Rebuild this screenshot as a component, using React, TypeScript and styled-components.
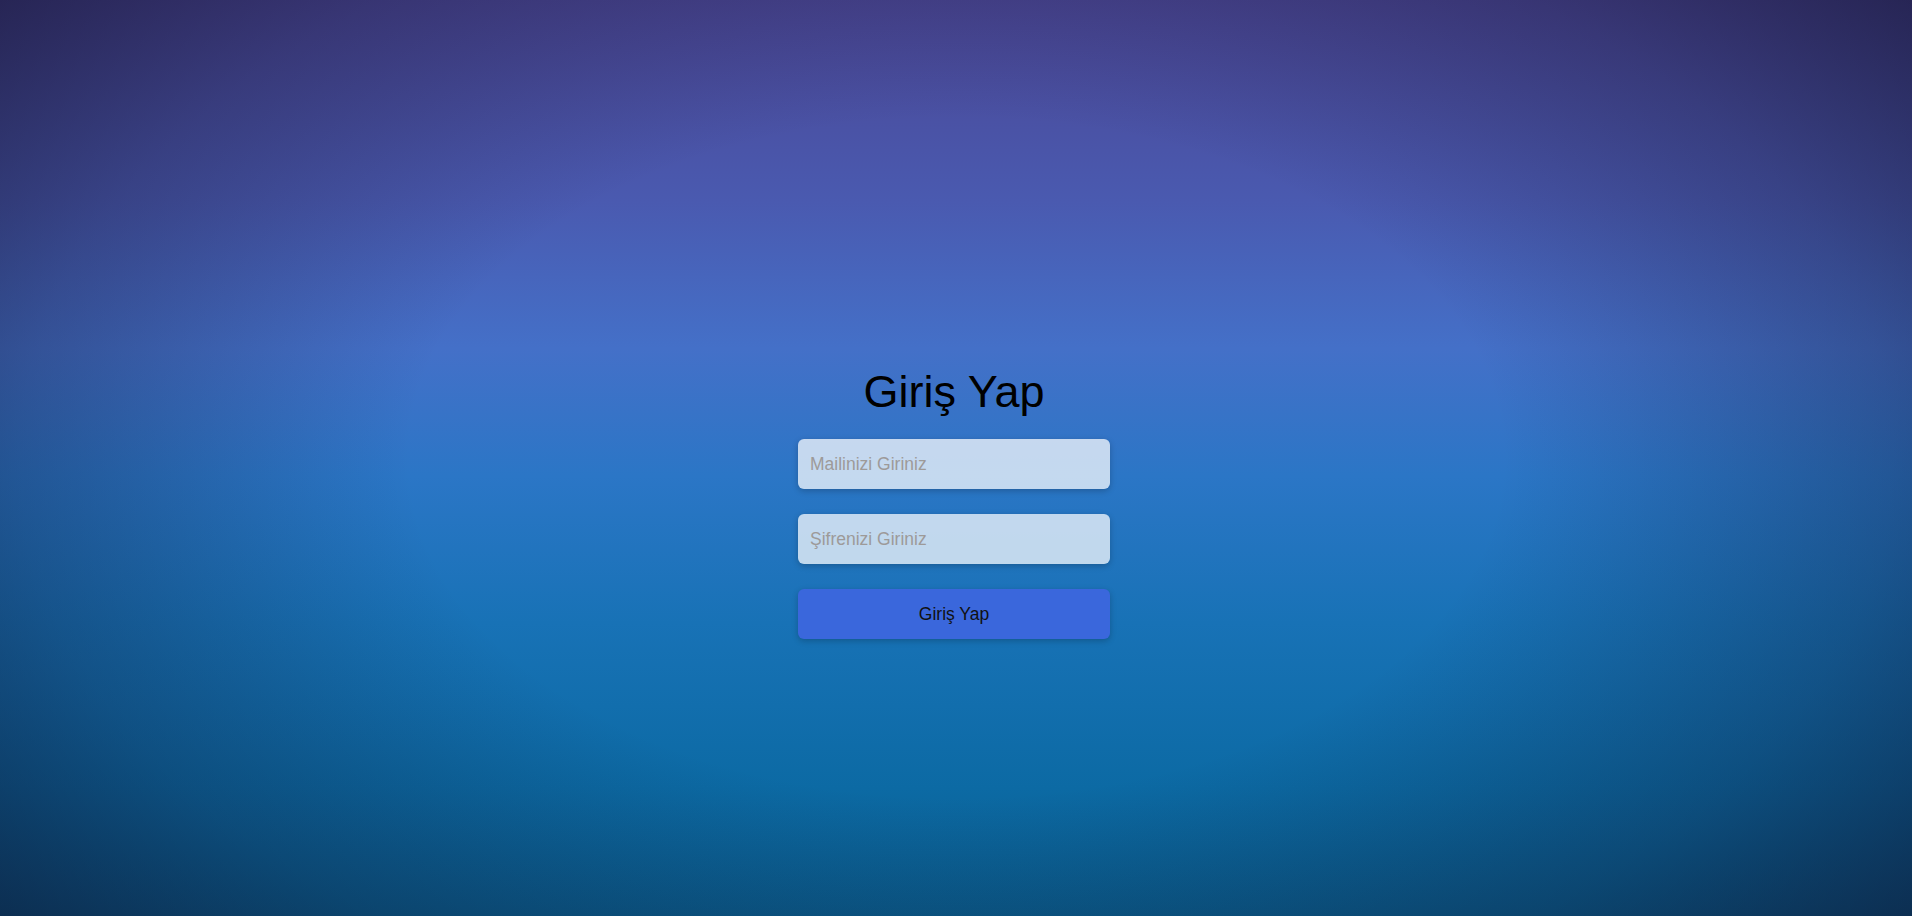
import React from "react";
import styled, { createGlobalStyle } from "styled-components";

const GlobalStyle = createGlobalStyle`
  html, body {
    margin: 0;
    padding: 0;
    height: 100%;
  }
  body {
    font-family: "Liberation Sans", Arial, sans-serif;
    overflow: hidden;
  }
  * { box-sizing: border-box; }
`;

const Page = styled.div`
  position: relative;
  width: 100%;
  height: 100vh;
  display: flex;
  flex-direction: column;
  align-items: center;
  padding-top: 366px;
  padding-right: 4px;
  background:
    radial-gradient(ellipse 68% 88% at 50% 50%, rgba(14, 14, 40, 0) 42%, rgba(14, 14, 40, 0.3) 72%, rgba(14, 14, 40, 0.68) 100%),
    linear-gradient(to bottom, #4a4694 0%, #4a5ab0 22%, #4470c8 38%, #2b76c6 52%, #1872b6 68%, #0c6aa4 86%, #0a5c8c 100%);
`;

const Form = styled.form`
  display: flex;
  flex-direction: column;
  align-items: center;
  width: 312px;
`;

const Title = styled.h1`
  margin: 0 0 22px;
  font-family: "Liberation Sans", Arial, sans-serif;
  font-weight: 400;
  font-size: 45px;
  line-height: 51px;
  color: #000;
`;

const Field = styled.input`
  width: 100%;
  height: 50px;
  margin-bottom: 25px;
  padding: 0 12px;
  border: none;
  border-radius: 6px;
  background: rgba(255, 255, 255, 0.72);
  box-shadow: 0 2px 6px rgba(0, 0, 0, 0.22);
  font-family: "Liberation Sans", Arial, sans-serif;
  font-size: 17.5px;
  color: #222;
  outline: none;
  &::placeholder {
    color: #9d9a99;
  }
`;

const Button = styled.button`
  width: 100%;
  height: 50px;
  border: none;
  border-radius: 6px;
  background: #3a67dc;
  box-shadow: 0 2px 6px rgba(0, 0, 0, 0.22);
  font-family: "Liberation Sans", Arial, sans-serif;
  font-size: 17.5px;
  color: #111;
  cursor: pointer;
`;

export default function App() {
  return (
    <>
      <GlobalStyle />
      <Page>
        <Form onSubmit={(e) => e.preventDefault()}>
          <Title>Giriş Yap</Title>
          <Field type="email" placeholder="Mailinizi Giriniz" />
          <Field type="password" placeholder="Şifrenizi Giriniz" />
          <Button type="submit">Giriş Yap</Button>
        </Form>
      </Page>
    </>
  );
}
